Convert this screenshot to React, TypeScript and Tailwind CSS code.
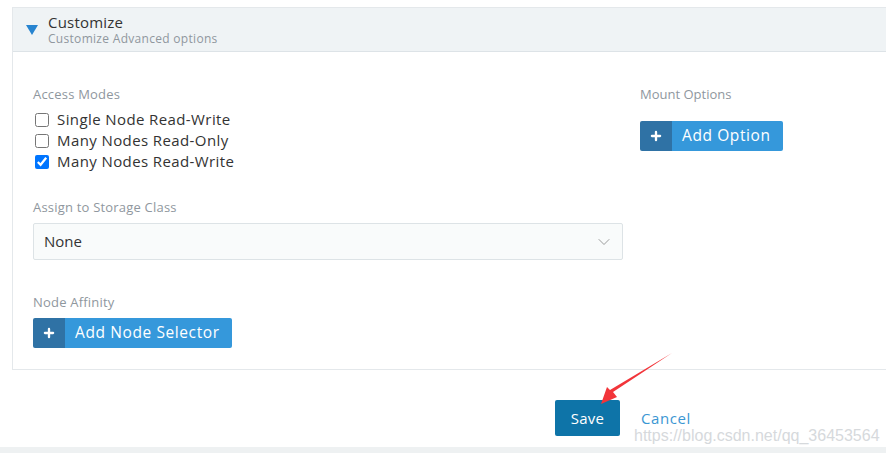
import { Plus, ChevronDown } from "lucide-react"

const font = { fontFamily: '"Open Sans", "Noto Sans", sans-serif' }

function AddButton({ label, width }: { label: string; width: string }) {
  return (
    <button className={`flex h-[30px] ${width} items-stretch rounded-[2px] overflow-hidden text-white`}>
      <span className="flex w-[32px] items-center justify-center bg-[#2f72a5]">
        <Plus size={14} strokeWidth={4} />
      </span>
      <span className="flex flex-1 items-center pl-[10px] bg-[#3598db] text-[15.5px] tracking-[0.6px]">{label}</span>
    </button>
  )
}

function Check({ label, checked }: { label: string; checked?: boolean }) {
  return (
    <label className="flex h-[21px] items-center gap-[8px] pl-[2px] text-[15px] tracking-[0.4px] text-[#333]">
      <input type="checkbox" defaultChecked={checked} className="h-[14px] w-[14px] m-0" />
      {label}
    </label>
  )
}

export default function App() {
  return (
    <div className="relative h-[453px] w-[886px] bg-white overflow-hidden" style={font}>
      <div className="pt-[7px] pl-[12px]">
        <div className="border-l border-t border-b border-[#e4e8eb]">
          <div className="flex h-[44px] items-start gap-[10px] bg-[#eff3f5] border-b border-[#dde3e7] pl-[13px]">
            <svg width="12" height="10" viewBox="0 0 12 10" className="mt-[17px]">
              <path d="M0 0 H12 L6 10 Z" fill="#2784d0" />
            </svg>
            <div className="pt-[4px]">
              <div className="text-[15px] leading-[20px] tracking-[0.2px] text-[#333]">Customize</div>
              <div className="text-[12px] leading-[14px] tracking-[0.3px] text-[#8f979e]">Customize Advanced options</div>
            </div>
          </div>
          <div className="flex pl-[20px] pt-[33px] pb-[21px]">
            <div className="w-[590px]">
              <div className="text-[13px] leading-[18px] tracking-[0.2px] text-[#8f979e]">Access Modes</div>
              <div className="mt-[6px] flex flex-col">
                <Check label="Single Node Read-Write" />
                <Check label="Many Nodes Read-Only" />
                <Check label="Many Nodes Read-Write" checked />
              </div>
              <div className="mt-[26px] text-[13px] leading-[18px] tracking-[0.2px] text-[#8f979e]">Assign to Storage Class</div>
              <div className="mt-[7px] flex h-[37px] items-center justify-between rounded-[2px] border border-[#dde3e6] bg-[#f9fbfb] pl-[10px] pr-[8px]">
                <span className="text-[15px] text-[#333]">None</span>
                <ChevronDown size={20} strokeWidth={1} className="text-[#888]" />
              </div>
              <div className="mt-[33px] text-[13px] leading-[18px] tracking-[0.2px] text-[#8f979e]">Node Affinity</div>
              <div className="mt-[7px]">
                <AddButton label="Add Node Selector" width="w-[199px]" />
              </div>
            </div>
            <div className="ml-[17px]">
              <div className="text-[13px] leading-[18px] text-[#8f979e]">Mount Options</div>
              <div className="mt-[18px]">
                <AddButton label="Add Option" width="w-[143px]" />
              </div>
            </div>
          </div>
        </div>
      </div>
      <div className="flex items-center pl-[555px] pt-[30px]">
        <button className="h-[36px] w-[65px] rounded-[2px] bg-[#0e74a8] text-[15px] tracking-[0.3px] text-white">Save</button>
        <span className="ml-[21px] text-[15px] tracking-[0.6px] text-[#3b97d3]">Cancel</span>
      </div>
      <div
        className="absolute left-[634px] top-[424px] text-[16px] text-[#d6d9dc]"
        style={{ fontFamily: '"Liberation Sans", Arial, sans-serif' }}
      >
        https://blog.csdn.net/qq_36453564
      </div>
      <div className="absolute bottom-0 left-0 h-[6px] w-full bg-[#eef1f2]" />
      <svg className="absolute left-0 top-0" width="886" height="453">
        <path d="M672 353 L613 392 L617 397 L601 404 L607 387 L610 390 Z" fill="#f2353a" />
      </svg>
    </div>
  )
}
